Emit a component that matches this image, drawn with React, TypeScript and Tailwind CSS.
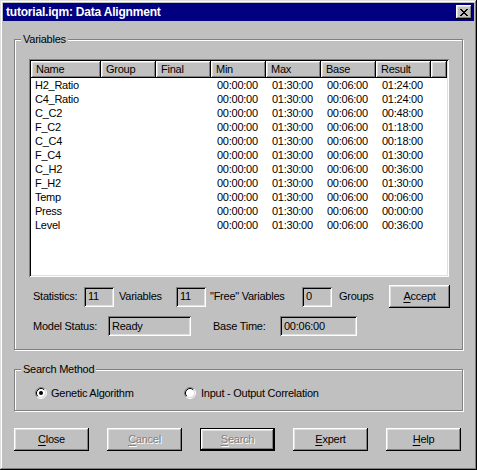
import React from 'react';

const rows: [string, string][] = [
  ['H2_Ratio', '01:24:00'],
  ['C4_Ratio', '01:24:00'],
  ['C_C2', '00:48:00'],
  ['F_C2', '01:18:00'],
  ['C_C4', '00:18:00'],
  ['F_C4', '01:30:00'],
  ['C_H2', '00:36:00'],
  ['F_H2', '01:30:00'],
  ['Temp', '00:06:00'],
  ['Press', '00:00:00'],
  ['Level', '00:36:00'],
];

const raised =
  'shadow-[inset_-1px_-1px_0_#000,inset_1px_1px_0_#fff,inset_-2px_-2px_0_#808080,inset_2px_2px_0_#dfdfdf]';
const sunken =
  'shadow-[inset_1px_1px_0_#808080,inset_-1px_-1px_0_#fff,inset_2px_2px_0_#000,inset_-2px_-2px_0_#dfdfdf]';
const etched = 'border border-[#808080] shadow-[1px_1px_0_#fff,inset_1px_1px_0_#fff]';

const Button: React.FC<{ label: string; u: number; disabled?: boolean; isDefault?: boolean; className?: string }> = ({
  label,
  u,
  disabled,
  isDefault,
  className = 'w-[75px]',
}) => {
  const text = (
    <span className={disabled ? 'text-[#808080] [text-shadow:1px_1px_0_#fff]' : 'text-black'}>
      {label.slice(0, u)}
      <span className="underline underline-offset-[2px]">{label[u]}</span>
      {label.slice(u + 1)}
    </span>
  );
  if (isDefault) {
    return (
      <div className={`${className} h-[23px] border border-black`}>
        <div className={`w-full h-full flex items-center justify-center ${raised}`}>{text}</div>
      </div>
    );
  }
  return <div className={`${className} h-[23px] flex items-center justify-center ${raised}`}>{text}</div>;
};

const Field: React.FC<{ value: string; className: string }> = ({ value, className }) => (
  <div className={`${className} h-[20px] pl-[4px] flex items-center ${sunken}`}>{value}</div>
);

const Radio: React.FC<{ checked?: boolean }> = ({ checked }) => (
  <svg width="12" height="12" viewBox="0 0 12 12" className="shrink-0">
    <circle cx="6" cy="6" r="4.5" fill="#fff" />
    <path d="M2.11 9.89 A5.5 5.5 0 0 1 9.89 2.11" fill="none" stroke="#808080" strokeWidth="1" />
    <path d="M9.89 2.11 A5.5 5.5 0 0 1 2.11 9.89" fill="none" stroke="#fff" strokeWidth="1" />
    <path d="M2.82 9.18 A4.5 4.5 0 0 1 9.18 2.82" fill="none" stroke="#000" strokeWidth="1" />
    <path d="M9.18 2.82 A4.5 4.5 0 0 1 2.82 9.18" fill="none" stroke="#dfdfdf" strokeWidth="1" />
    {checked && <circle cx="6" cy="6" r="2" fill="#000" />}
  </svg>
);

const headers = ['Name', 'Group', 'Final', 'Min', 'Max', 'Base', 'Result'];

export default function App() {
  return (
    <div className="w-[477px] h-[470px] bg-[#c0c0c0] p-[3px] flex flex-col font-['Liberation_Sans',Arial,sans-serif] text-[11px] tracking-[-0.25px] text-black shadow-[inset_-1px_-1px_0_#000,inset_1px_1px_0_#dfdfdf,inset_-2px_-2px_0_#808080,inset_2px_2px_0_#fff]">
      {/* title bar */}
      <div className="h-[18px] bg-[#000080] flex items-center justify-between pl-[3px] pr-[2px]">
        <span className="text-white font-bold text-[12px] tracking-[-0.2px]">tutorial.iqm: Data Alignment</span>
        <div className={`w-[16px] h-[14px] bg-[#c0c0c0] flex items-center justify-center ${raised}`}>
          <svg width="8" height="7" viewBox="0 0 8 7" shapeRendering="crispEdges">
            <path
              d="M0 0h2v1H0zM6 0h2v1H6zM1 1h2v1H1zM5 1h2v1H5zM2 2h4v1H2zM3 3h2v1H3zM2 4h4v1H2zM1 5h2v1H1zM5 5h2v1H5zM0 6h2v1H0zM6 6h2v1H6z"
              fill="#000"
            />
          </svg>
        </div>
      </div>

      <div className="pl-[11px] pt-[18px]">
        {/* Variables group */}
        <div className={`relative w-[449px] h-[311px] ${etched} pl-[14px] pt-[19px]`}>
          <span className="absolute -top-[8px] left-[6px] bg-[#c0c0c0] px-[2px] leading-[14px]">Variables</span>

          <div className={`w-[420px] h-[218px] bg-white p-[2px] ${sunken}`}>
            <div className="flex h-[17px]">
              {headers.map((h, i) => (
                <div
                  key={h}
                  className={`${i === 0 ? 'w-[70px]' : 'w-[55px]'} h-[17px] bg-[#c0c0c0] pl-[5px] leading-[17px] ${raised}`}
                >
                  {h}
                </div>
              ))}
              <div className={`flex-1 h-[17px] bg-[#c0c0c0] ${raised}`} />
            </div>
            {rows.map(([name, result]) => (
              <div key={name} className="flex h-[14px] leading-[14px]">
                <div className="w-[70px] pl-[4px]">{name}</div>
                <div className="w-[55px]" />
                <div className="w-[55px]" />
                <div className="w-[55px] pl-[6px]">00:00:00</div>
                <div className="w-[55px] pl-[6px]">01:30:00</div>
                <div className="w-[55px] pl-[6px]">00:06:00</div>
                <div className="w-[55px] pl-[6px]">{result}</div>
              </div>
            ))}
          </div>

          <div className="ml-[4px] mt-[8px] h-[23px] flex items-center">
            <span className="w-[51px]">Statistics:</span>
            <Field value="11" className="w-[30px]" />
            <span className="w-[62px] pl-[5px]">Variables</span>
            <Field value="11" className="w-[30px]" />
            <span className="w-[96px] pl-[4px]">"Free" Variables</span>
            <Field value="0" className="w-[30px]" />
            <span className="w-[57px] pl-[7px]">Groups</span>
            <Button label="Accept" u={0} className="w-[61px]" />
          </div>

          <div className="ml-[4px] mt-[8px] h-[20px] flex items-center">
            <span className="w-[75px]">Model Status:</span>
            <Field value="Ready" className="w-[83px]" />
            <span className="w-[89px] pl-[22px]">Base Time:</span>
            <Field value="00:06:00" className="w-[77px]" />
          </div>
        </div>

        {/* Search Method group */}
        <div className={`relative mt-[19px] w-[449px] h-[42px] ${etched} pl-[20px] pt-[17px]`}>
          <span className="absolute -top-[8px] left-[6px] bg-[#c0c0c0] px-[2px] leading-[14px]">Search Method</span>
          <div className="flex items-center h-[12px]">
            <div className="w-[149px] flex items-center gap-[4px]">
              <Radio checked />
              <span>Genetic Algorithm</span>
            </div>
            <div className="flex items-center gap-[5px]">
              <Radio />
              <span>Input - Output Correlation</span>
            </div>
          </div>
        </div>

        <div className="mt-[17px] flex gap-[18px]">
          <Button label="Close" u={0} />
          <Button label="Cancel" u={0} disabled />
          <Button label="Search" u={0} disabled isDefault />
          <Button label="Expert" u={0} />
          <Button label="Help" u={0} />
        </div>
      </div>
    </div>
  );
}
